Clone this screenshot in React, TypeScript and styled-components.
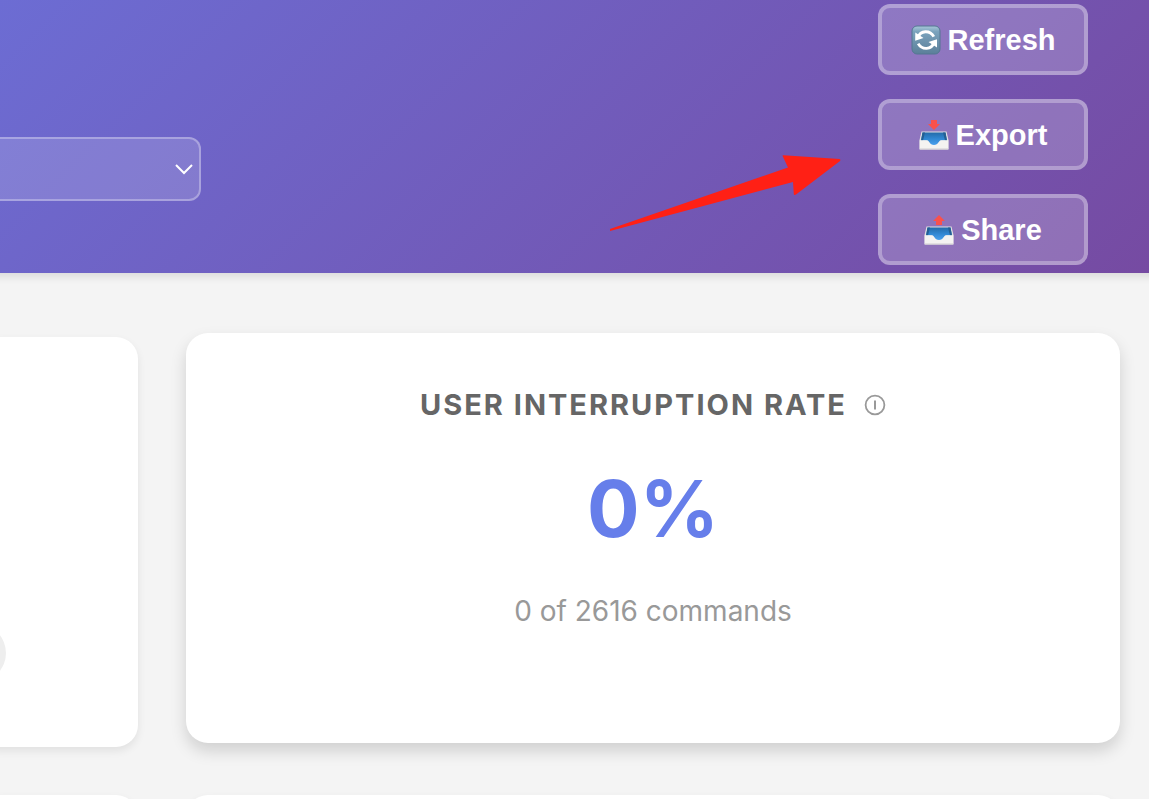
import React from "react";
import styled, { createGlobalStyle } from "styled-components";

const GlobalStyle = createGlobalStyle`
  * { box-sizing: border-box; }
  body { margin: 0; background: #fff; overflow: hidden; }
`;

const Page = styled.div`
  position: relative;
  height: 100vh;
  overflow: hidden;
  background: #f4f4f4;
  border: solid #fff;
  border-width: 0 1px 1px 0;
  font-family: Inter, "Liberation Sans", sans-serif;
`;

const Header = styled.header`
  display: flex;
  align-items: flex-start;
  justify-content: space-between;
  margin: 0 -24px;
  padding: 4px 85px 8px 0;
  background: linear-gradient(135deg, #6c6dd4 0%, #764aa1 100%);
  box-shadow: 0 4px 8px rgba(0, 0, 0, 0.1);
`;

const SelectField = styled.div`
  position: relative;
  margin-top: 133px;
`;

const Select = styled.select`
  display: block;
  appearance: none;
  width: 225px;
  height: 64px;
  border: 2px solid rgba(255, 255, 255, 0.3);
  border-radius: 12px;
  background: rgba(255, 255, 255, 0.15);
  color: #fff;
  font: 28px Inter, sans-serif;
`;

const Chevron = styled.svg`
  position: absolute;
  right: 8px;
  top: 26px;
  width: 18px;
  height: 12px;
  pointer-events: none;
`;

const Actions = styled.div`
  display: flex;
  flex-direction: column;
  gap: 24px;
`;

const ActionButton = styled.button`
  display: flex;
  align-items: center;
  justify-content: center;
  gap: 7px;
  width: 210px;
  height: 71px;
  padding: 2px 0 0;
  border: 4px solid rgba(255, 255, 255, 0.3);
  border-radius: 12px;
  background: rgba(255, 255, 255, 0.2);
  color: #fff;
  font: bold 29px "Liberation Sans", Arial, sans-serif;
`;

const ActionIcon = styled.svg`
  width: 30px;
  height: 30px;
  margin-bottom: 2px;
  flex: none;
`;

const Pointer = styled.svg`
  position: absolute;
  right: 308px;
  top: 154px;
  width: 232px;
  height: 80px;
  pointer-events: none;
`;

const Metrics = styled.main`
  display: grid;
  grid-template-columns: 162px 1fr;
  gap: 48px;
  margin-left: -24px;
  padding: 64px 29px 0 0;
`;

const Card = styled.section<{ $raised?: boolean; $edge?: boolean }>`
  display: flex;
  flex-direction: column;
  align-items: ${(p) => (p.$edge ? "flex-start" : "center")};
  height: 410px;
  padding-top: 52px;
  overflow: hidden;
  background: #fff;
  border-radius: 22px;
  box-shadow: ${(p) =>
    p.$raised ? "0 8px 16px rgba(0, 0, 0, 0.15)" : "0 4px 8px rgba(0, 0, 0, 0.08)"};
  transform: ${(p) => (p.$raised ? "translateY(-4px)" : "none")};
`;

const Dot = styled.span`
  width: 58px;
  height: 58px;
  margin: 235px 0 0 -28px;
  border-radius: 50%;
  background: #eee;
`;

const TitleRow = styled.div`
  display: flex;
  align-items: center;
  gap: 17px;
`;

const Title = styled.h2`
  margin: 0;
  color: #666;
  font-size: 29px;
  font-weight: 700;
  line-height: 40px;
  letter-spacing: 2px;
  text-transform: uppercase;
`;

const InfoIcon = styled.svg`
  width: 22px;
  height: 22px;
`;

const Value = styled.div`
  margin-top: 36px;
  color: #667eea;
  font-size: 78px;
  font-weight: 700;
  line-height: 96px;
`;

const Detail = styled.p`
  margin: 34px 0 0;
  color: #999;
  font-size: 28px;
  line-height: 40px;
`;

const RefreshGlyph = () => (
  <ActionIcon viewBox="0 0 30 30" aria-hidden="true">
    <defs>
      <linearGradient id="refreshFill" x1="0" y1="0" x2="0" y2="1">
        <stop offset="0" stopColor="#a9c8d9" />
        <stop offset="0.2" stopColor="#7ba3bd" />
        <stop offset="1" stopColor="#5b7f99" />
      </linearGradient>
    </defs>
    <rect x="1" y="1" width="28" height="28" rx="5" fill="url(#refreshFill)" stroke="#547792" />
    <path d="M7 12.500C9.500 5 19 4.800 22.800 11.600M23 17.500C20.500 25 11 25.200 7.200 18.600" fill="none" stroke="#fff" strokeWidth="2.900" />
    <path d="M4.300 7.500L4.200 15.800L12.500 13ZM26 22.500L26 14.200L17.500 17Z" fill="#fff" />
  </ActionIcon>
);

const TrayGlyph = ({ up }: { up?: boolean }) => (
  <ActionIcon viewBox="0 0 30 30" aria-hidden="true">
    <defs>
      <linearGradient id="trayFill" x1="0" y1="0" x2="0" y2="1">
        <stop offset="0" stopColor="#246ba9" />
        <stop offset="0.5" stopColor="#3187d2" />
        <stop offset="1" stopColor="#4aa0ed" />
      </linearGradient>
    </defs>
    <path d="M2.500 11.500H27.500L29.500 20V29.500H.5V20Z" fill="#e2e0e2" />
    <path d="M3.500 12.500H26.500L28 20.500H21L18 25H12L9 20.500H2Z" fill="url(#trayFill)" />
    <path d="M3.500 12.500L2 20.500H4L6 12.500ZM26.500 12.500L28 20.500H26L24 12.500Z" fill="#245f92" />
    <path d="M.7 20.300H7.500C10 20.300 10.500 25 15 25S20 20.300 22.500 20.300H29.300V29.300H.7Z" fill="#f4f3f1" />
    <path d="M1 29H29" stroke="#d0cdd0" />
    <path d={up ? "M15 0L21 6H18V10H12V6H9Z" : "M12 0H18V4H21L15 10L9 4H12Z"} fill="#f9514c" />
  </ActionIcon>
);

export default function App() {
  return (
    <Page>
      <GlobalStyle />
      <Header>
        <SelectField>
          <Select aria-label="Project" />
          <Chevron viewBox="0 0 18 12" aria-hidden="true">
            <path d="M1 2L9 10L17 2" fill="none" stroke="#fff" strokeWidth="2" />
          </Chevron>
        </SelectField>
        <Actions>
          <ActionButton type="button"><RefreshGlyph />Refresh</ActionButton>
          <ActionButton type="button"><TrayGlyph />Export</ActionButton>
          <ActionButton type="button"><TrayGlyph up />Share</ActionButton>
        </Actions>
      </Header>
      <Pointer viewBox="0 0 232 80" aria-hidden="true">
        <path d="M1 75L179 13.500L173.500 1.800Q173.600 1 174.500 1.200L230.500 5Q232 5.800 231 7L187 40.500Q185 41.500 184.800 40L184 28L1 77Z" fill="#ff2015" />
      </Pointer>
      <Metrics>
        <Card $edge><Dot /></Card>
        <Card $raised>
          <TitleRow>
            <Title>User Interruption Rate</Title>
            <InfoIcon viewBox="0 0 22 22" role="img" aria-label="Info">
              <circle cx="11" cy="11" r="9.400" fill="none" stroke="#999" strokeWidth="1.800" />
              <path d="M11 6.500V15.500" stroke="#999" strokeWidth="2" />
            </InfoIcon>
          </TitleRow>
          <Value>0%</Value>
          <Detail>0 of 2616 commands</Detail>
        </Card>
        <Card $edge />
        <Card />
      </Metrics>
    </Page>
  );
}
